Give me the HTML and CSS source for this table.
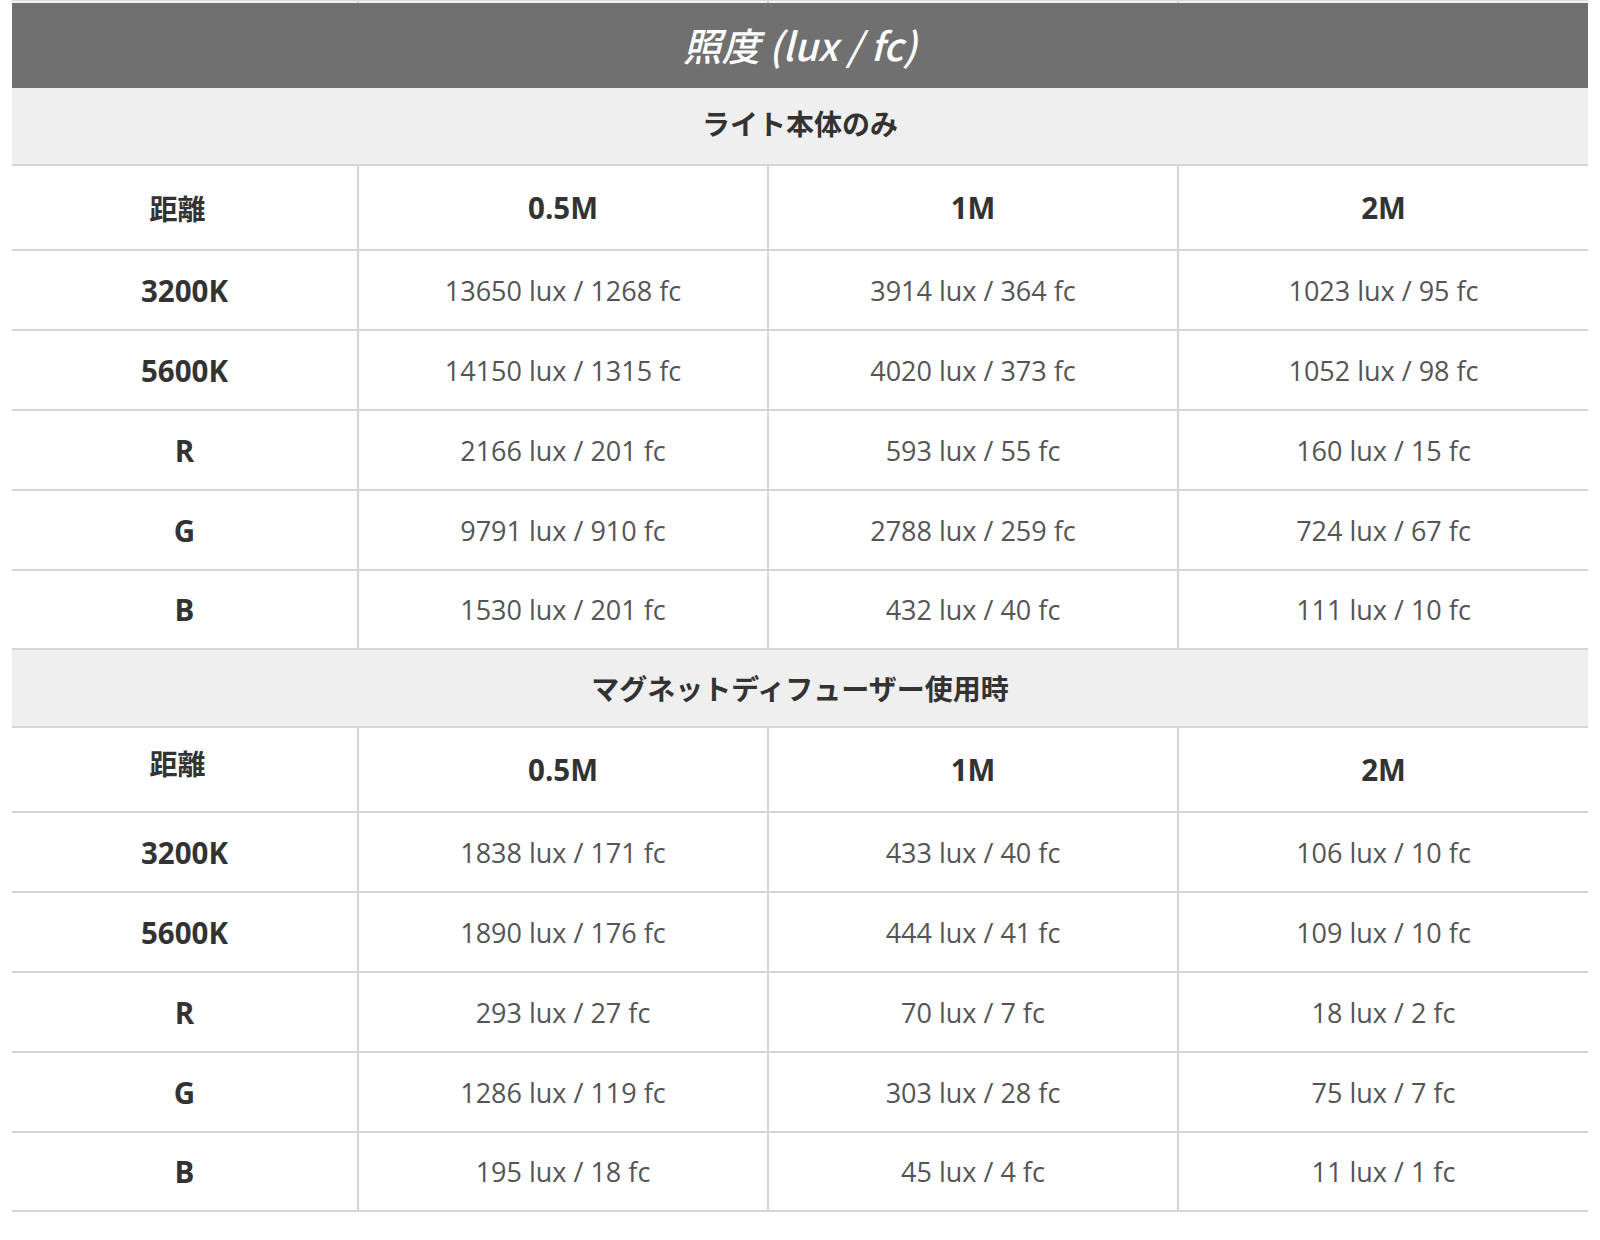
FILE: index.html
```html
<!DOCTYPE html>
<html lang="ja">
<head>
<meta charset="utf-8">
<title>照度 (lux / fc)</title>
<link rel="stylesheet" href="styles.css">
</head>
<body>
<div class="sheet">
  <div class="row top-strip"><div class="c"></div><div class="c"></div><div class="c"></div><div class="c"></div></div>
  <div class="title">照度 (lux / fc)</div>

  <div class="sub">ライト本体のみ</div>
  <div class="row head"><div class="c lbl kyori">距離</div><div class="c lbl">0.5M</div><div class="c lbl">1M</div><div class="c lbl">2M</div></div>
  <div class="row"><div class="c lbl">3200K</div><div class="c val">13650 lux / 1268 fc</div><div class="c val">3914 lux / 364 fc</div><div class="c val">1023 lux / 95 fc</div></div>
  <div class="row"><div class="c lbl">5600K</div><div class="c val">14150 lux / 1315 fc</div><div class="c val">4020 lux / 373 fc</div><div class="c val">1052 lux / 98 fc</div></div>
  <div class="row"><div class="c lbl">R</div><div class="c val">2166 lux / 201 fc</div><div class="c val">593 lux / 55 fc</div><div class="c val">160 lux / 15 fc</div></div>
  <div class="row"><div class="c lbl">G</div><div class="c val">9791 lux / 910 fc</div><div class="c val">2788 lux / 259 fc</div><div class="c val">724 lux / 67 fc</div></div>
  <div class="row last"><div class="c lbl">B</div><div class="c val">1530 lux / 201 fc</div><div class="c val">432 lux / 40 fc</div><div class="c val">111 lux / 10 fc</div></div>

  <div class="sub sub2">マグネットディフューザー使用時</div>
  <div class="row head"><div class="c lbl kyori kyori2">距離</div><div class="c lbl">0.5M</div><div class="c lbl">1M</div><div class="c lbl">2M</div></div>
  <div class="row"><div class="c lbl">3200K</div><div class="c val">1838 lux / 171 fc</div><div class="c val">433 lux / 40 fc</div><div class="c val">106 lux / 10 fc</div></div>
  <div class="row"><div class="c lbl">5600K</div><div class="c val">1890 lux / 176 fc</div><div class="c val">444 lux / 41 fc</div><div class="c val">109 lux / 10 fc</div></div>
  <div class="row"><div class="c lbl">R</div><div class="c val">293 lux / 27 fc</div><div class="c val">70 lux / 7 fc</div><div class="c val">18 lux / 2 fc</div></div>
  <div class="row"><div class="c lbl">G</div><div class="c val">1286 lux / 119 fc</div><div class="c val">303 lux / 28 fc</div><div class="c val">75 lux / 7 fc</div></div>
  <div class="row last"><div class="c lbl">B</div><div class="c val">195 lux / 18 fc</div><div class="c val">45 lux / 4 fc</div><div class="c val">11 lux / 1 fc</div></div>
</div>
</body>
</html>
```
FILE: styles.css
```css
* { box-sizing: border-box; }
html, body { margin: 0; padding: 0; background: #ffffff; }
body { font-family: "Open Sans", "Noto Sans CJK JP", sans-serif; }

.sheet {
  width: 1576px;
  margin-left: 12px;
}

.row {
  display: grid;
  grid-template-columns: 345px 410px 410px 411px;
  height: 80px;
  border-bottom: 2px solid #d5d5d5;
}
.row.last { height: 79px; }
.row .c {
  display: flex;
  align-items: center;
  justify-content: center;
}
.row .c + .c { border-left: 2px solid #d5d5d5; }

.row.head { height: 85px; }

.top-strip {
  height: 3px;
  border-bottom: none;
  background: #f2f2f2;
  border-top: 1px solid #dcdcdc;
}

.title {
  height: 85px;
  background: #707070;
  color: #ffffff;
  font-family: "Noto Sans CJK JP", sans-serif;
  font-style: italic;
  font-weight: 500;
  font-size: 38.5px;
  display: flex;
  align-items: center;
  justify-content: center;
  padding-bottom: 3px;
}

.sub {
  height: 78px;
  background: #efefef;
  border-bottom: 2px solid #d5d5d5;
  color: #333333;
  font-family: "Noto Sans CJK JP", sans-serif;
  font-weight: 700;
  font-size: 28px;
  display: flex;
  align-items: center;
  justify-content: center;
  padding-bottom: 6px;
}
.sub2 { padding-bottom: 0; }

.lbl {
  font-family: "Open Sans", "Noto Sans CJK JP", sans-serif;
  font-weight: 700;
  font-size: 29.5px;
  color: #333333;
}
.kyori {
  font-family: "Noto Sans CJK JP", sans-serif;
  font-size: 28px;
  padding-right: 14px;
}
.kyori2 { padding-bottom: 14px; }

.val {
  font-family: "Open Sans", sans-serif;
  font-weight: 400;
  font-size: 27px;
  color: #555555;
}
```
